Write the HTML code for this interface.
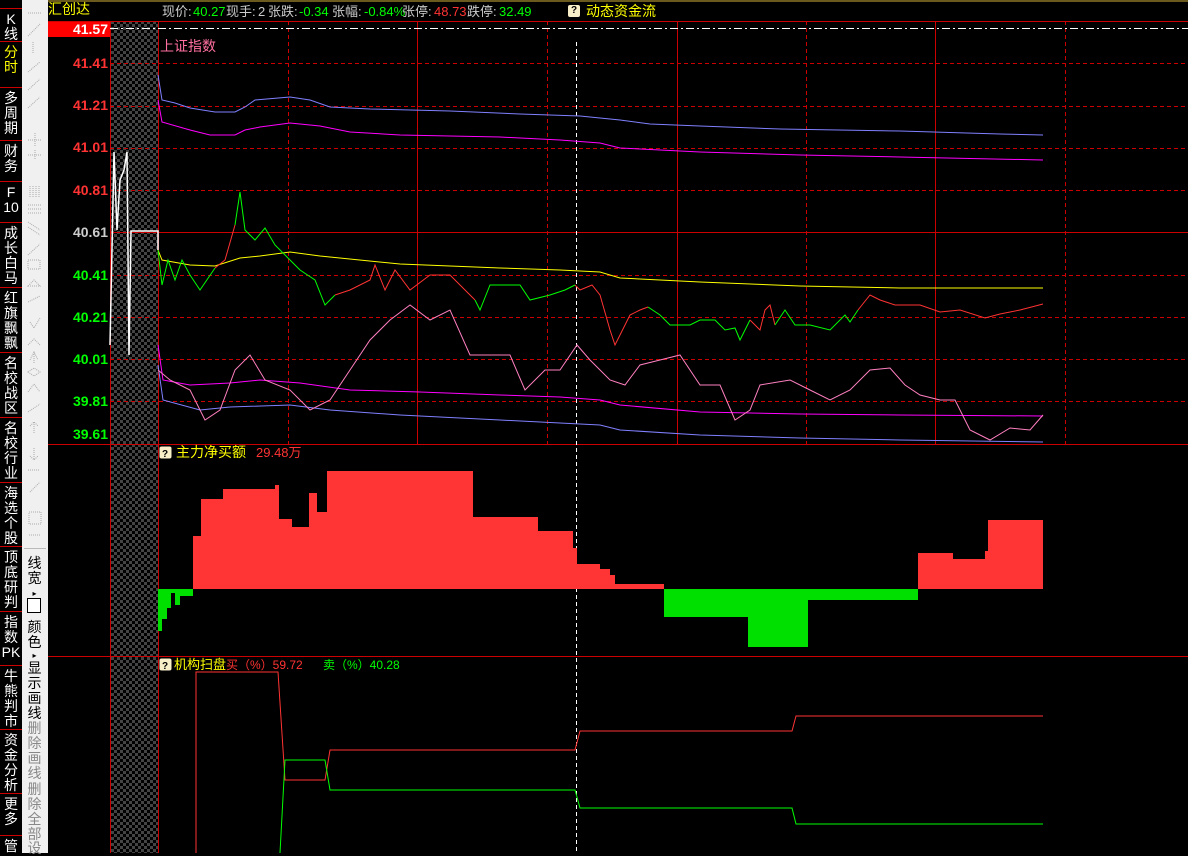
<!DOCTYPE html>
<html><head><meta charset="utf-8"><style>
html,body{margin:0;padding:0;background:#000;width:1188px;height:853px;overflow:hidden;font-family:"Liberation Sans","Noto Sans CJK SC",sans-serif}
.tabs{position:absolute;left:0;top:0;width:22px;height:853px;background:#000;border-right:1px solid #c00}
.tab{position:absolute;left:0;width:22px;color:#fff;font-size:14px;line-height:15px;text-align:center;border-top:1px solid #c00;box-sizing:border-box;padding-top:3px}
.tool{position:absolute;left:22px;top:0;width:26px;height:853px;background:#f0f0f0}
.tt{position:absolute;left:5px;width:15px;font-size:14px;line-height:15px;text-align:center}
.ax{position:absolute;left:48px;width:60px;text-align:right;font:bold 14px "Liberation Sans",sans-serif}
.tb{position:absolute;top:4px;font-size:13px;line-height:15px;height:15px;white-space:nowrap}
</style></head><body>
<div class="tabs">
<div class="tab" style="top:8px;height:33px">K<br>线</div>
<div class="tab" style="top:41px;height:46px;color:#ff0">分<br>时</div>
<div class="tab" style="top:87px;height:53px">多<br>周<br>期</div>
<div class="tab" style="top:140px;height:41px">财<br>务</div>
<div class="tab" style="top:181px;height:41px">F<br>10</div>
<div class="tab" style="top:222px;height:65px">成<br>长<br>白<br>马</div>
<div class="tab" style="top:287px;height:65px">红<br>旗<br>飘<br>飘</div>
<div class="tab" style="top:352px;height:65px">名<br>校<br>战<br>区</div>
<div class="tab" style="top:417px;height:65px">名<br>校<br>行<br>业</div>
<div class="tab" style="top:482px;height:64px">海<br>选<br>个<br>股</div>
<div class="tab" style="top:546px;height:65px">顶<br>底<br>研<br>判</div>
<div class="tab" style="top:611px;height:54px">指<br>数<br>PK</div>
<div class="tab" style="top:665px;height:64px">牛<br>熊<br>判<br>市</div>
<div class="tab" style="top:729px;height:64px">资<br>金<br>分<br>析</div>
<div class="tab" style="top:793px;height:42px">更<br>多</div>
<div class="tab" style="top:835px;height:20px">管</div>
</div>
<div class="tool">
<svg width="26" height="545" style="position:absolute;left:0;top:0" stroke="#aaa" stroke-dasharray="1 1" fill="none">
<line x1="6" y1="13" x2="20" y2="13"/><line x1="6" y1="36" x2="18" y2="24"/><line x1="11" y1="42" x2="11" y2="54"/>
<line x1="6" y1="72" x2="18" y2="62"/><line x1="6" y1="90" x2="18" y2="79"/><line x1="6" y1="108" x2="18" y2="97"/>
<path d="M6 140h14M13 133v14M6 155h14M13 150v10"/><path d="M8 186v12M11 186v12M14 186v12M17 186v12"/>
<path d="M6 205h14M6 209h14M6 213h14"/><path d="M6 222l12 8M6 227l12 8"/><line x1="6" y1="255" x2="18" y2="244"/>
<rect x="6" y="260" width="12" height="9"/><path d="M6 286l6-6l6 6z"/><path d="M6 302l12-6"/><path d="M8 322l4 6l6-10"/>
<path d="M6 345l6-6l6 6"/><path d="M12 352v12M8 360l4-8l4 8"/><path d="M6 372l6-4l6 4l-6 4z"/><path d="M6 392l6-8l6 8"/>
<path d="M6 412l12-8"/><path d="M12 422v12M8 426l4-4l4 4"/><path d="M12 448v12M8 456l4 4l4-4"/><path d="M6 470h12"/><path d="M8 492l10-10"/>
<path d="M7 512h12v12h-12z"/><path d="M7 535h12"/></svg>
<div style="position:absolute;left:2px;top:548px;width:22px;border-top:1px solid #bbb"></div>
<div class="tt" style="top:556px">线<br>宽</div>
<div class="tt" style="top:586px;font-size:8px">▸</div>
<div style="position:absolute;left:5px;top:598px;width:12px;height:13px;border:1px solid #000;background:#fff"></div>
<div class="tt" style="top:620px">颜<br>色</div>
<div class="tt" style="top:648px;font-size:8px">▸</div>
<div class="tt" style="top:661px">显<br>示<br>画<br>线</div>
<div class="tt" style="top:721px;color:#888">删<br>除<br>画<br>线</div>
<div class="tt" style="top:782px;color:#888">删<br>除<br>全<br>部</div>
<div class="tt" style="top:841px;color:#888">设</div>
</div>
<div style="position:absolute;left:48px;top:0;width:1140px;height:2px;background:#6b5a1e"></div>
<div style="position:absolute;left:48px;top:1px;color:#ff0;font-size:14px;line-height:16px">汇创达</div>
<div class="tb" style="left:162px;color:#ccc">现价:</div><div class="tb" style="left:193px;color:#0f0">40.27</div>
<div class="tb" style="left:226px;color:#ccc">现手:</div><div class="tb" style="left:258px;color:#ccc">2</div>
<div class="tb" style="left:268px;color:#ccc">张跌:</div><div class="tb" style="left:299px;color:#0f0">-0.34</div>
<div class="tb" style="left:332px;color:#ccc">张幅:</div><div class="tb" style="left:364px;color:#0f0">-0.84%</div>
<div class="tb" style="left:402px;color:#ccc">张停:</div><div class="tb" style="left:434px;color:#f33">48.73</div>
<div class="tb" style="left:467px;color:#ccc">跌停:</div><div class="tb" style="left:499px;color:#0f0">32.49</div>
<div style="position:absolute;left:568px;top:5px;width:12px;height:12px;background:#f8eec8;border-radius:2px;font:bold 10px sans-serif;text-align:center;line-height:12px">?</div>
<div style="position:absolute;left:586px;top:3px;color:#ff0;font-size:14px;line-height:16px">动态资金流</div>
<div style="position:absolute;left:48px;top:21px;width:62px;height:16px;background:#f00"></div>
<div class="ax" style="top:21px;color:#fff">41.57</div>
<div class="ax" style="top:55px;color:#f33">41.41</div>
<div class="ax" style="top:97px;color:#f33">41.21</div>
<div class="ax" style="top:139px;color:#f33">41.01</div>
<div class="ax" style="top:182px;color:#f33">40.81</div>
<div class="ax" style="top:224px;color:#ccc">40.61</div>
<div class="ax" style="top:267px;color:#0f0">40.41</div>
<div class="ax" style="top:309px;color:#0f0">40.21</div>
<div class="ax" style="top:351px;color:#0f0">40.01</div>
<div class="ax" style="top:393px;color:#0f0">39.81</div>
<div class="ax" style="top:426px;color:#0f0">39.61</div>
<svg width="1188" height="853" style="position:absolute;left:0;top:0" fill="none">
<defs><pattern id="ck" width="6" height="6" patternUnits="userSpaceOnUse"><rect width="6" height="6" fill="#000"/><rect width="3" height="3" fill="#444"/><rect x="3" y="3" width="3" height="3" fill="#444"/></pattern></defs>
<rect x="110" y="21" width="48" height="832" fill="url(#ck)"/>
<g stroke="#c00" stroke-width="1">
<line x1="48" y1="21.5" x2="1188" y2="21.5"/>
<line x1="110.5" y1="21" x2="110.5" y2="853"/><line x1="158.5" y1="21" x2="158.5" y2="853"/>
<line x1="48" y1="444.5" x2="1188" y2="444.5"/><line x1="48" y1="656.5" x2="1188" y2="656.5"/>
<line x1="110" y1="232.5" x2="1188" y2="232.5"/>
<line x1="417.5" y1="21" x2="417.5" y2="444"/><line x1="677.5" y1="21" x2="677.5" y2="444"/><line x1="935.5" y1="21" x2="935.5" y2="444"/>
</g>
<g stroke="#c00" stroke-dasharray="4 3">
<line x1="110" y1="63.5" x2="1188" y2="63.5"/><line x1="110" y1="106.5" x2="1188" y2="106.5"/><line x1="110" y1="148.5" x2="1188" y2="148.5"/>
<line x1="110" y1="190.5" x2="1188" y2="190.5"/><line x1="110" y1="275.5" x2="1188" y2="275.5"/><line x1="110" y1="317.5" x2="1188" y2="317.5"/>
<line x1="110" y1="359.5" x2="1188" y2="359.5"/><line x1="110" y1="401.5" x2="1188" y2="401.5"/>
<line x1="288.5" y1="21" x2="288.5" y2="444"/><line x1="547.5" y1="21" x2="547.5" y2="444"/><line x1="806.5" y1="21" x2="806.5" y2="444"/><line x1="1065.5" y1="21" x2="1065.5" y2="444"/>
</g>
<line x1="110" y1="28.5" x2="1188" y2="28.5" stroke="#fff" stroke-dasharray="8 3 2 3"/>
<line x1="576.5" y1="42" x2="576.5" y2="853" stroke="#fff" stroke-dasharray="4 3"/>
<text x="160" y="51" fill="#ff6fa0" font-size="14" font-family="Liberation Sans,Noto Sans CJK SC,sans-serif">上证指数</text>
<polyline stroke="#fff" stroke-width="1.5" points="110,345 114,152 117,230 120,180 124,170 127,152 129,355 131,231 158,231 158,250"/>
<polyline stroke="#8080ff" points="158,75 162,100 175,103 190,108 215,112 235,112 245,107 255,100 290,97 310,100 330,107 370,109 450,111 520,114 580,116 620,120 650,124 700,126 780,129 900,131 1000,134 1043,135"/>
<polyline stroke="#f0f" points="158,100 162,122 190,130 210,135 235,135 245,130 260,127 290,123 320,126 350,132 400,135 500,137 560,140 600,143 620,148 700,152 800,155 900,157 1043,160"/>
<polyline stroke="#f0f" points="158,345 163,380 190,385 230,383 260,380 300,383 350,390 420,392 500,395 560,397 600,400 620,405 700,412 800,414 900,415 1043,416"/>
<polyline stroke="#8080ff" points="158,365 163,400 200,410 230,407 290,405 330,410 400,415 500,420 560,423 600,425 620,430 700,435 800,438 900,440 1043,442"/>
<polyline stroke="#ff0" points="158,250 162,260 190,265 215,266 240,258 260,256 290,252 320,256 400,264 500,268 560,270 600,272 620,278 700,282 800,286 900,288 1043,288"/>
<polyline stroke="#ff80c0" points="158,370 170,380 190,390 205,420 220,410 235,370 250,355 265,380 290,390 310,410 330,400 350,370 370,340 390,320 410,305 430,320 450,310 470,355 490,355 510,355 525,390 545,370 560,370 577,345 590,360 610,380 625,385 640,365 660,360 680,355 700,385 720,385 735,420 750,410 760,385 790,380 810,390 830,400 850,390 870,370 890,368 905,385 920,395 940,400 955,400 970,430 990,440 1010,428 1030,430 1043,415"/>
<polyline stroke="#0f0" points="158,250 162,285 168,260 175,280 182,260 190,275 200,290 215,268"/>
<polyline stroke="#f33" points="215,268 225,260 235,225"/>
<polyline stroke="#0f0" points="235,225 240,192 245,230 255,240 265,228 275,245 290,260 300,270 315,280 325,305 335,295"/>
<polyline stroke="#f33" points="335,295 350,290 370,280 375,265 385,290 395,270 410,290 430,275 450,275 475,300"/>
<polyline stroke="#0f0" points="475,300 480,310 490,285 520,285 530,300 550,295 565,290 575,285"/>
<polyline stroke="#f33" points="575,285 580,290 592,285 600,295 610,330 615,345 620,335 630,315 640,310 648,307"/>
<polyline stroke="#0f0" points="648,307 660,315 670,325 690,325 700,320 715,320 725,330 735,328 740,340 750,320"/>
<polyline stroke="#f33" points="750,320 760,330 765,310 770,305 775,325"/>
<polyline stroke="#0f0" points="775,325 785,310 795,325 810,325 830,330 845,315 850,322 858,310"/>
<polyline stroke="#f33" points="858,310 870,295 880,300 895,305 920,305 940,312 960,310 985,318 1000,314 1020,310 1043,304"/>
<g fill="#ff3535">
<rect x="193" y="536" width="8" height="53"/><rect x="201" y="499" width="22" height="90"/><rect x="223" y="489" width="56" height="100"/><rect x="275" y="485" width="4" height="104"/>
<rect x="279" y="519" width="13" height="70"/><rect x="292" y="527" width="17" height="62"/><rect x="309" y="493" width="8" height="96"/><rect x="317" y="512" width="10" height="77"/>
<rect x="327" y="471" width="146" height="118"/><rect x="473" y="517" width="65" height="72"/><rect x="538" y="531" width="35" height="58"/><rect x="573" y="548" width="4" height="41"/>
<rect x="577" y="564" width="23" height="25"/><rect x="600" y="569" width="10" height="20"/><rect x="610" y="575" width="5" height="14"/><rect x="615" y="584" width="49" height="5"/>
<rect x="918" y="553" width="35" height="36"/><rect x="953" y="559" width="32" height="30"/><rect x="985" y="551" width="3" height="38"/><rect x="988" y="520" width="55" height="69"/>
</g>
<g fill="#00e000">
<rect x="158" y="589" width="4" height="42"/><rect x="162" y="589" width="5" height="30"/><rect x="167" y="589" width="4" height="19"/><rect x="171" y="589" width="4" height="4"/>
<rect x="175" y="589" width="5" height="16"/><rect x="180" y="589" width="13" height="7"/>
<rect x="664" y="589" width="84" height="28"/><rect x="748" y="589" width="60" height="58"/><rect x="790" y="589" width="18" height="56"/><rect x="808" y="589" width="110" height="11"/>
</g>
<rect x="159.5" y="446.5" width="12" height="12" rx="2" fill="#f8eec8"/><text x="162" y="457" fill="#000" font-size="10" font-weight="bold">?</text>
<text x="176" y="457" fill="#ff0" font-size="14" font-family="Liberation Sans,Noto Sans CJK SC,sans-serif">主力净买额</text>
<text x="256" y="457" fill="#f33" font-size="13" font-family="Liberation Sans,Noto Sans CJK SC,sans-serif">29.48万</text>
<rect x="159.5" y="658.5" width="12" height="12" rx="2" fill="#f8eec8"/><text x="162" y="669" fill="#000" font-size="10" font-weight="bold">?</text>
<text x="174" y="669" fill="#ff0" font-size="13" font-family="Liberation Sans,Noto Sans CJK SC,sans-serif">机构扫盘</text>
<text x="226" y="669" fill="#f33" font-size="12" font-family="Liberation Sans,Noto Sans CJK SC,sans-serif">买（%）59.72</text>
<text x="323" y="669" fill="#0f0" font-size="12" font-family="Liberation Sans,Noto Sans CJK SC,sans-serif">卖（%）40.28</text>
<polyline stroke="#f33" points="196,853 196,672 278,672 285,780 325,780 330,750 575,750 580,731 792,731 796,716 1043,716"/>
<polyline stroke="#0f0" points="280,853 285,760 325,760 330,790 575,790 580,808 792,808 796,824 1043,824"/>
</svg>
</body></html>
